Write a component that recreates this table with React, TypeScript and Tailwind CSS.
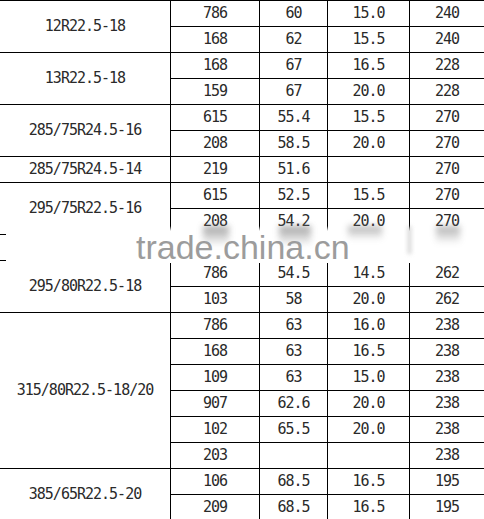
import React from 'react';

type Row = [string, string, string, string];

interface Block {
  size: string;
  rows: Row[];
}

const blocks: Block[] = [
  { size: '12R22.5-18', rows: [['786', '60', '15.0', '240'], ['168', '62', '15.5', '240']] },
  { size: '13R22.5-18', rows: [['168', '67', '16.5', '228'], ['159', '67', '20.0', '228']] },
  { size: '285/75R24.5-16', rows: [['615', '55.4', '15.5', '270'], ['208', '58.5', '20.0', '270']] },
  { size: '285/75R24.5-14', rows: [['219', '51.6', '', '270']] },
  { size: '295/75R22.5-16', rows: [['615', '52.5', '15.5', '270'], ['208', '54.2', '20.0', '270']] },
  { size: '', rows: [['', '', '', '']] },
  { size: '295/80R22.5-18', rows: [['786', '54.5', '14.5', '262'], ['103', '58', '20.0', '262']] },
  {
    size: '315/80R22.5-18/20',
    rows: [
      ['786', '63', '16.0', '238'],
      ['168', '63', '16.5', '238'],
      ['109', '63', '15.0', '238'],
      ['907', '62.6', '20.0', '238'],
      ['102', '65.5', '20.0', '238'],
      ['203', '', '', '238'],
    ],
  },
  { size: '385/65R22.5-20', rows: [['106', '68.5', '16.5', '195'], ['209', '68.5', '16.5', '195']] },
];

const spanClass: Record<number, string> = {
  1: 'row-span-1',
  2: 'row-span-2',
  6: 'row-span-6',
};

const Cell: React.FC<{ children?: React.ReactNode; className?: string }> = ({ children, className = '' }) => (
  <div className={`bg-white flex items-center justify-center h-[25px] ${className}`}>{children}</div>
);

// smeared ghost marks under the watermark
const smears = [
  'left-[203px] w-[26px] h-[20px] opacity-70',
  'left-[279px] w-[32px] h-[20px] opacity-70',
  'left-[348px] w-[34px] h-[14px] opacity-60',
  'left-[436px] w-[24px] h-[18px] opacity-60',
];

export default function App() {
  return (
    <div className="relative w-[484px] h-[519px] overflow-hidden bg-white">
      <div
        className="grid grid-cols-[170px_88px_67px_81px_74px] auto-rows-[25px] gap-px bg-black pt-px text-[15px] tracking-[-1px] text-[#2a2a2a]"
        style={{ fontFamily: '"DejaVu Sans Mono", "Liberation Mono", monospace' }}
      >
        {blocks.map((b, bi) => (
          <React.Fragment key={bi}>
            <div className={`bg-white flex items-center justify-center ${spanClass[b.rows.length]}`}>{b.size}</div>
            {b.rows.map((r, ri) =>
              r.map((v, ci) => <Cell key={`${ri}-${ci}`}>{v}</Cell>)
            )}
          </React.Fragment>
        ))}
      </div>

      {/* watermark */}
      <div className="absolute left-[6px] right-0 top-[226px] h-[37px] flex flex-col">
        <div className="h-[5px] bg-linear-to-b from-white/0 to-white" />
        <div className="flex-1 bg-white" />
      </div>
      {smears.map((s, i) => (
        <div
          key={i}
          className={`absolute top-[226px] bg-linear-to-b from-[#7a7a7a] to-transparent blur-[3px] ${s}`}
        />
      ))}
      <div className="absolute left-[408px] top-[226px] w-[3px] h-[28px] bg-[#aaa] blur-[2px] opacity-60" />
      <div
        className="absolute left-[136px] top-[230px] text-[34px] leading-[34px] text-[#9c9c9c]"
        style={{ fontFamily: '"Liberation Sans", Arial, sans-serif' }}
      >
        trade.china.cn
      </div>
    </div>
  );
}
